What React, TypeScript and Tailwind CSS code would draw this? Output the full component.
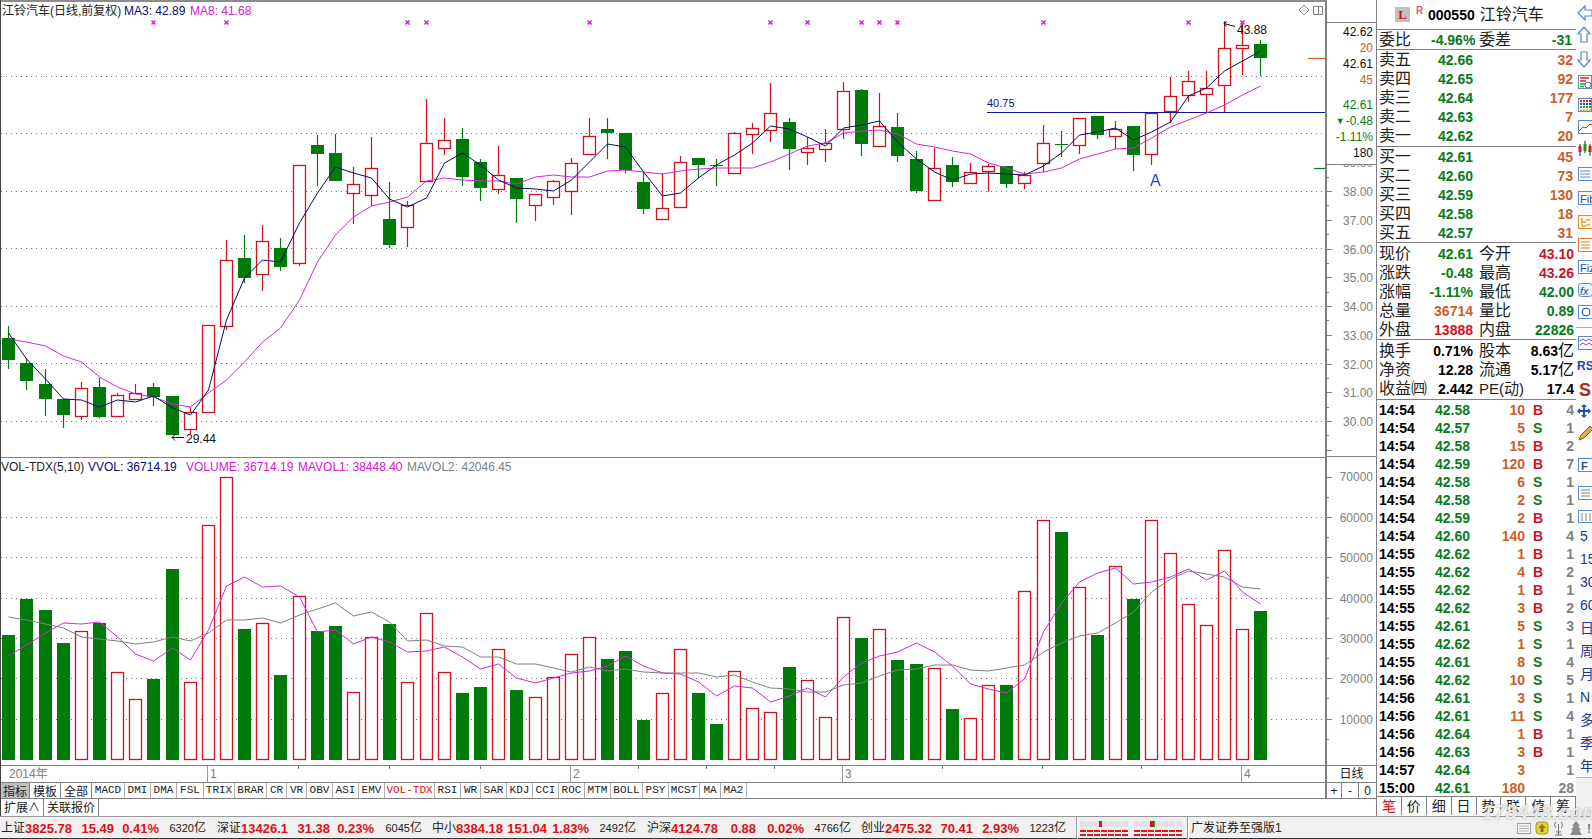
import React from 'react';

const X = (i: number) => Math.round(8.3 + 18.145 * i) + 0.5;

// [high, bodyTop, bodyBottom, low, 'r'|'g']
const C: [number, number, number, number, string][] = [
  [326, 338, 360, 369, 'g'], [358, 363, 381, 390, 'g'], [369, 384, 399, 416, 'g'], [399, 399, 415, 428, 'g'],
  [382, 388, 416, 420, 'r'], [378, 387, 417, 418, 'g'], [393, 395, 416, 416, 'r'], [384, 393, 399, 399, 'r'],
  [383, 387, 397, 406, 'g'], [396, 396, 435, 435, 'g'], [407, 412, 429, 434, 'r'], [325, 325, 412, 412, 'r'],
  [240, 260, 326, 330, 'r'], [235, 258, 278, 283, 'g'], [225, 241, 274, 291, 'r'], [238, 248, 267, 271, 'g'],
  [165, 165, 263, 266, 'r'], [135, 145, 154, 186, 'g'], [134, 153, 181, 181, 'g'], [167, 184, 193, 224, 'r'],
  [137, 168, 195, 206, 'r'], [182, 219, 245, 248, 'g'], [201, 205, 227, 247, 'r'], [99, 143, 181, 181, 'r'],
  [118, 140, 148, 155, 'r'], [128, 139, 177, 186, 'g'], [159, 162, 188, 201, 'g'], [146, 175, 189, 194, 'r'],
  [178, 178, 199, 223, 'g'], [194, 194, 205, 221, 'r'], [180, 181, 197, 205, 'r'], [158, 163, 191, 215, 'r'],
  [118, 136, 154, 154, 'r'], [118, 129, 133, 159, 'g'], [133, 133, 170, 173, 'g'], [173, 182, 209, 214, 'g'],
  [173, 208, 219, 219, 'r'], [156, 162, 207, 208, 'r'], [158, 158, 165, 178, 'g'], [159, 165, 166, 186, 'g'],
  [132, 133, 173, 173, 'r'], [123, 128, 134, 154, 'r'], [83, 113, 130, 142, 'r'], [118, 122, 149, 170, 'g'],
  [137, 148, 152, 165, 'r'], [129, 143, 149, 162, 'r'], [82, 91, 129, 139, 'r'], [89, 90, 144, 156, 'g'],
  [93, 126, 146, 146, 'r'], [113, 127, 156, 162, 'g'], [151, 159, 191, 193, 'g'], [148, 168, 200, 200, 'r'],
  [157, 165, 182, 187, 'g'], [163, 172, 183, 183, 'r'], [164, 166, 171, 192, 'r'], [166, 166, 184, 188, 'g'],
  [172, 175, 183, 189, 'r'], [125, 143, 163, 172, 'r'], [131, 144, 145, 157, 'g'], [118, 118, 145, 154, 'r'],
  [116, 116, 135, 139, 'g'], [121, 129, 136, 149, 'r'], [126, 126, 155, 171, 'g'], [113, 113, 154, 165, 'r'],
  [77, 96, 111, 123, 'r'], [71, 81, 95, 102, 'r'], [71, 88, 94, 113, 'r'], [21, 48, 85, 112, 'r'],
  [23, 45, 48, 75, 'r'], [40, 44, 58, 76, 'g'],
];

const MA3 = [333, 359, 379, 399, 400, 407, 400, 402, 396, 408, 415, 390, 320, 278, 260, 262, 223, 193, 167, 173, 178, 199, 207, 198, 163, 153, 165, 180, 188, 189, 191, 180, 162, 144, 147, 172, 196, 193, 178, 165, 155, 143, 126, 129, 137, 146, 128, 125, 121, 142, 159, 172, 180, 174, 173, 174, 175, 166, 153, 135, 132, 128, 140, 132, 122, 96, 88, 71, 61, 51];
const MA8 = [339, 342, 346, 356, 362, 377, 387, 394, 397, 404, 407, 393, 380, 362, 342, 328, 300, 262, 235, 217, 206, 202, 197, 181, 178, 180, 181, 181, 184, 177, 175, 177, 177, 171, 170, 172, 174, 171, 169, 168, 168, 168, 162, 154, 146, 143, 133, 131, 130, 134, 144, 147, 151, 154, 163, 168, 174, 172, 168, 159, 154, 149, 148, 138, 127, 120, 113, 105, 95, 86];

const VOL = [635, 599, 610, 643, 631, 623, 672, 699, 679, 569, 682, 525, 477, 629, 623, 675, 596, 631, 626, 692, 637, 624, 682, 613, 672, 693, 687, 649, 690, 697, 677, 654, 637, 659, 651, 720, 693, 649, 693, 724, 671, 708, 712, 667, 680, 717, 617, 638, 629, 660, 664, 668, 709, 718, 685, 685, 591, 520, 532, 587, 635, 566, 599, 520, 553, 604, 625, 550, 629, 611];
const MV1 = [656, 645, 633, 623, 624, 622, 637, 654, 661, 648, 660, 630, 586, 577, 587, 586, 597, 632, 630, 644, 637, 642, 652, 651, 647, 657, 669, 664, 678, 683, 678, 673, 671, 666, 656, 666, 673, 674, 682, 696, 686, 688, 702, 696, 688, 697, 677, 663, 656, 652, 643, 652, 666, 684, 689, 693, 679, 632, 603, 582, 573, 568, 584, 582, 577, 569, 580, 571, 592, 604];
const MV2 = [617, 620, 624, 628, 637, 639, 641, 644, 642, 637, 641, 633, 620, 620, 618, 623, 615, 609, 603, 616, 612, 622, 641, 640, 646, 647, 657, 657, 664, 664, 668, 672, 667, 671, 669, 672, 673, 673, 673, 677, 675, 682, 688, 689, 692, 692, 685, 683, 676, 670, 669, 665, 665, 670, 671, 668, 665, 652, 643, 636, 633, 623, 612, 592, 579, 571, 574, 577, 587, 589];

const MARKS = [8, 12, 22, 23, 32, 42, 44, 47, 48, 49, 57, 65, 68];

const pts = (a: number[]) => a.map((y, i) => `${X(i)},${y}`).join(' ');

function MainChart() {
  return (
    <svg width={1324} height={455} viewBox="1 2 1324 455" className="block">
      {[76, 133, 191, 248, 306, 363, 421].map((y) => (
        <line key={y} x1={1} x2={1325} y1={y + 0.5} y2={y + 0.5} stroke="#777" strokeDasharray="1 4" />
      ))}
      {C.map(([h, t, b, l, k], i) => {
        const x = X(i);
        const col = k === 'r' ? '#cc1420' : '#007a0a';
        return (
          <g key={i}>
            <line x1={x} x2={x} y1={h} y2={l} stroke={col} strokeWidth={1.2} />
            {k === 'r' ? (
              <rect x={x - 6} y={t + 0.5} width={12} height={b - t} fill="#fff" stroke={col} strokeWidth={1.3} />
            ) : (
              <rect x={x - 6.5} y={t} width={13} height={Math.max(b - t, 1)} fill={col} shapeRendering="crispEdges" />
            )}
          </g>
        );
      })}
      <line x1={987} x2={1325} y1={112.5} y2={112.5} stroke="#10109a" strokeWidth={1} />
      <polyline points={pts(MA8)} fill="none" stroke="#d22ad2" strokeWidth={1} />
      <polyline points={pts(MA3)} fill="none" stroke="#0a0a60" strokeWidth={1} />
      {MARKS.map((i) => (
        <path key={i} d={`M${X(i) - 2} 20.5l4 4M${X(i) + 2} 20.5l-4 4`} stroke="#e020e0" strokeWidth={1.7} />
      ))}
      <text x={987} y={107} fontSize={11} fill="#10109a">40.75</text>
      <text x={1150} y={186} fontSize={16} fill="#2a48c8">A</text>
      <text x={1237} y={34} fontSize={12} fill="#111">43.88</text>
      <path d="M1224 23.5l11 3M1224 23.5l3 -2M1224 23.5l2.5 3" stroke="#111" fill="none" strokeWidth={1} />
      <text x={186} y={443} fontSize={12} fill="#111">29.44</text>
      <path d="M172 437.5h12M172 437.5l3 -3M172 437.5l3 3" stroke="#111" fill="none" strokeWidth={1} />
      <path d="M1304 5l5 5l-5 5l-5 -5z" fill="none" stroke="#909090" />
      <rect x={1313.5} y={6.5} width={9} height={8} fill="none" stroke="#808080" />
      <line x1={1318.5} x2={1318.5} y1={6} y2={15} stroke="#808080" />
      <line x1={1308} x2={1325} y1={58.5} y2={58.5} stroke="#d06020" strokeWidth={1.2} />
      <line x1={1314} x2={1325} y1={168.5} y2={168.5} stroke="#0a7a14" strokeWidth={1.2} />
    </svg>
  );
}

function VolChart() {
  return (
    <svg width={1324} height={307} viewBox="1 458 1324 307" className="block">
      {[517, 557, 598, 638, 678, 719].map((y) => (
        <line key={y} x1={1} x2={1325} y1={y + 0.5} y2={y + 0.5} stroke="#777" strokeDasharray="1 4" />
      ))}
      {VOL.map((t, i) => {
        const x = X(i);
        return C[i][4] === 'r' ? (
          <rect key={i} x={x - 6} y={t + 0.5} width={12} height={759 - t} fill="#fff" stroke="#cc1420" strokeWidth={1.3} />
        ) : (
          <rect key={i} x={x - 6.5} y={t} width={13} height={760 - t} fill="#007a0a" shapeRendering="crispEdges" />
        );
      })}
      <polyline points={pts(MV2)} fill="none" stroke="#808080" strokeWidth={1} />
      <polyline points={pts(MV1)} fill="none" stroke="#d22ad2" strokeWidth={1} />
    </svg>
  );
}

function MainAxis() {
  const labels = ['39.00', '38.00', '37.00', '36.00', '35.00', '34.00', '33.00', '32.00', '31.00', '30.00'];
  const ticks: number[] = [];
  for (let k = -1; k < 20; k++) ticks.push(191 + k * 14.375);
  return (
    <svg width={49} height={291} viewBox="1327 165 49 291" className="block">
      {ticks.map((y, k) => (
        <line key={k} x1={1327} x2={k % 2 === 1 ? 1332 : 1329} y1={Math.round(y) + 0.5} y2={Math.round(y) + 0.5} stroke="#808080" />
      ))}
      {labels.map((t, i) => (
        <text key={t} x={1373} y={162.25 + i * 28.75 + 5} textAnchor="end" fontSize={12} fill="#808080">{t}</text>
      ))}
    </svg>
  );
}

function VolAxis() {
  const labels = ['70000', '60000', '50000', '40000', '30000', '20000', '10000'];
  const major = [476.7, 517, 557.3, 598, 638, 678.3, 719];
  return (
    <svg width={49} height={308} viewBox="1327 457 49 308" className="block">
      {major.map((y, i) => (
        <g key={i}>
          <line x1={1327} x2={1332} y1={Math.round(y) + 0.5} y2={Math.round(y) + 0.5} stroke="#808080" />
          <line x1={1327} x2={1329} y1={Math.round(y + 20) + 0.5} y2={Math.round(y + 20) + 0.5} stroke="#808080" />
          <text x={1373} y={y + 4.5} textAnchor="end" fontSize={12} fill="#808080">{labels[i]}</text>
        </g>
      ))}
    </svg>
  );
}

function TimeAxis() {
  return (
    <svg width={1324} height={16} viewBox="1 766 1324 16" className="block">
      {[207.5, 570.5, 842.5, 1241.5].map((x) => (
        <line key={x} x1={x} x2={x} y1={766} y2={782} stroke="#9a9a9a" />
      ))}
      {[298.5, 389.5, 480.5, 638.5, 706.5, 774.5, 942.5, 1042.5, 1141.5].map((x) => (
        <line key={x} x1={x} x2={x} y1={766} y2={769} stroke="#808080" />
      ))}
      <text x={9} y={778} fontSize={12} fill="#808080">2014年</text>
      <text x={210} y={778} fontSize={12} fill="#808080">1</text>
      <text x={573} y={778} fontSize={12} fill="#808080">2</text>
      <text x={845} y={778} fontSize={12} fill="#808080">3</text>
      <text x={1244} y={778} fontSize={12} fill="#808080">4</text>
    </svg>
  );
}

const ASK = [['卖五', '42.66', '32'], ['卖四', '42.65', '92'], ['卖三', '42.64', '177'], ['卖二', '42.63', '7'], ['卖一', '42.62', '20']];
const BID = [['买一', '42.61', '45'], ['买二', '42.60', '73'], ['买三', '42.59', '130'], ['买四', '42.58', '18'], ['买五', '42.57', '31']];
const G = 'text-[#0a7a1e]';
const R = 'text-[#cc1424]';
const O = 'text-[#c8602a]';
const K = 'text-black';
const STATS: [string, string, string, string, string, string][] = [
  ['现价', '42.61', G, '今开', '43.10', R],
  ['涨跌', '-0.48', G, '最高', '43.26', R],
  ['涨幅', '-1.11%', G, '最低', '42.00', G],
  ['总量', '36714', O, '量比', '0.89', G],
  ['外盘', '13888', R, '内盘', '22826', G],
];
const TICKS: [string, string, string, string, string][] = [
  ['14:54', '42.58', '10', 'B', '4'], ['14:54', '42.57', '5', 'S', '1'], ['14:54', '42.58', '15', 'B', '2'],
  ['14:54', '42.59', '120', 'B', '7'], ['14:54', '42.58', '6', 'S', '1'], ['14:54', '42.58', '2', 'S', '1'],
  ['14:54', '42.59', '2', 'B', '1'], ['14:54', '42.60', '140', 'B', '4'], ['14:55', '42.62', '1', 'B', '1'],
  ['14:55', '42.62', '4', 'B', '2'], ['14:55', '42.62', '1', 'B', '1'], ['14:55', '42.62', '3', 'B', '2'],
  ['14:55', '42.61', '5', 'S', '3'], ['14:55', '42.62', '1', 'S', '1'], ['14:55', '42.61', '8', 'S', '4'],
  ['14:56', '42.62', '10', 'S', '5'], ['14:56', '42.61', '3', 'S', '1'], ['14:56', '42.61', '11', 'S', '4'],
  ['14:56', '42.64', '1', 'B', '1'], ['14:56', '42.63', '3', 'B', '1'], ['14:57', '42.64', '3', '', '1'],
  ['15:00', '42.61', '180', '', '28'],
];

function BookRow({ r }: { r: string[] }) {
  return (
    <div className="flex h-[19px] items-center pl-[2px]">
      <span className="w-[56px] text-[16px] leading-none text-[#222]">{r[0]}</span>
      <span className={`w-[38px] text-right text-[14px] font-bold leading-none ${G}`}>{r[1]}</span>
      <span className={`flex-1 pr-[3px] text-right text-[14px] font-bold leading-none ${O}`}>{r[2]}</span>
    </div>
  );
}

function StatRow({ a, b, ac, c, d, dc }: { a: React.ReactNode; b: React.ReactNode; ac: string; c: React.ReactNode; d: React.ReactNode; dc: string }) {
  return (
    <div className="flex h-[19px] items-center pl-[2px]">
      <span className="w-[50px] whitespace-nowrap text-[16px] leading-none text-[#222]">{a}</span>
      <span className={`w-[44px] whitespace-nowrap text-right text-[14px] font-bold leading-none ${ac}`}>{b}</span>
      <span className="ml-[6px] w-[44px] whitespace-nowrap text-[16px] leading-none text-[#222]">{c}</span>
      <span className={`flex-1 whitespace-nowrap pr-[2px] text-right text-[14px] font-bold leading-none ${dc}`}>{d}</span>
    </div>
  );
}

const YI = <span className="text-[16px] font-normal">亿</span>;

function RightPanel() {
  return (
    <div className="flex w-[199px] flex-col overflow-hidden">
      <div className="flex h-[30px] shrink-0 items-center border-b border-[#808080] pl-[18px]">
        <span className="flex h-[15px] w-[15px] items-center justify-center bg-[#c0c0c0] text-[13px] font-bold leading-none text-[#d01010] [font-family:'Liberation_Serif',serif]">L</span>
        <span className="mb-[8px] ml-[6px] w-[12px] text-[10px] font-bold leading-none text-[#e06070]">R</span>
        <span className="text-[14px] font-bold leading-none text-black">000550</span>
        <span className="ml-[5px] text-[16px] leading-none text-[#222]">江铃汽车</span>
      </div>
      <div className="flex h-[20px] shrink-0 items-center border-b border-[#808080] pl-[2px]">
        <span className="w-[52px] text-[16px] leading-none text-[#222]">委比</span>
        <span className={`w-[43px] text-right text-[14px] font-bold leading-none ${G}`}>-4.96%</span>
        <span className="ml-[5px] w-[44px] text-[16px] leading-none text-[#222]">委差</span>
        <span className={`flex-1 pr-[4px] text-right text-[14px] font-bold leading-none ${G}`}>-31</span>
      </div>
      <div className="h-[97px] shrink-0 border-b border-[#808080]">
        {ASK.map((r) => <BookRow key={r[0]} r={r} />)}
      </div>
      <div className="h-[96px] shrink-0 border-b border-[#808080]">
        {BID.map((r) => <BookRow key={r[0]} r={r} />)}
      </div>
      <div className="h-[97px] shrink-0 border-b border-[#808080] pt-[1px]">
        {STATS.map((s) => <StatRow key={s[0]} a={s[0]} b={s[1]} ac={s[2]} c={s[3]} d={s[4]} dc={s[5]} />)}
      </div>
      <div className="h-[60px] shrink-0 border-b border-[#808080] pt-[1px]">
        <StatRow a="换手" b="0.71%" ac={K} c="股本" d={<>8.63{YI}</>} dc={K} />
        <StatRow a="净资" b="12.28" ac={K} c="流通" d={<>5.17{YI}</>} dc={K} />
        <StatRow a="收益㈣" b="2.442" ac={K} c={<span className="text-[15px]">PE(动)</span>} d="17.4" dc={K} />
      </div>
      <div className="h-[397px] shrink-0 border-b border-[#808080] pt-[1px]">
        {TICKS.map((t, i) => (
          <div key={i} className="flex h-[18px] items-center pl-[2px] text-[14px] font-bold leading-none">
            <span className="w-[56px] text-black">{t[0]}</span>
            <span className={`w-[36px] ${G}`}>{t[1]}</span>
            <span className={`w-[54px] text-right ${O}`}>{t[2]}</span>
            <span className={`w-[17px] pl-[8px] ${t[3] === 'B' ? R : G}`}>{t[3]}</span>
            <span className="flex-1 pr-[2px] text-right text-[#808080]">{t[4]}</span>
          </div>
        ))}
      </div>
      <div className="flex h-[18px] shrink-0 text-[14px] leading-none text-[#222]">
        {['笔', '价', '细', '日', '势', '联', '值', '筹'].map((t, i) => (
          <span key={t} className={`flex h-full w-[25px] items-center justify-center border-r border-[#808080] ${i === 0 ? 'text-[#d01010]' : ''}`}>{t}</span>
        ))}
      </div>
    </div>
  );
}

function ToolIcons() {
  return (
    <svg width={16} height={524} viewBox="0 0 16 524" className="block shrink-0">
      <path d="M2 13l7 -7v4h7v6h-7v4z" fill="#fff" stroke="#5a8cc8" strokeWidth={1.2} />
      <path d="M8 27l6 7h-3v8h-6v-8h-3z" fill="#fff" stroke="#5a8cc8" strokeWidth={1.2} />
      <path d="M8 67l6 -7h-3v-8h-6v8h-3z" fill="#fff" stroke="#5a8cc8" strokeWidth={1.2} />
      <rect x={2.5} y={75.5} width={13} height={13} fill="#fff" stroke="#5a8cc8" />
      <path d="M4 78h9M4 81h6" stroke="#d02020" strokeWidth={1.5} />
      <path d="M4 84h5M4 86.5h4" stroke="#20a020" strokeWidth={1.5} />
      <circle cx={12} cy={85} r={3} fill="none" stroke="#707070" />
      <rect x={2.5} y={98.5} width={13} height={13} fill="#fff" stroke="#5a8cc8" />
      <path d="M4 101h2M7 101h2M10 101h2M13 101h2" stroke="#d02020" strokeWidth={2} />
      <path d="M4 104h2M7 104h2M10 104h2M13 104h2" stroke="#2050c0" strokeWidth={2} />
      <path d="M4 107h2M7 107h2M10 107h2M13 107h2" stroke="#20a020" strokeWidth={2} />
      <path d="M4 110h2M7 110h2M10 110h2M13 110h2" stroke="#d0a020" strokeWidth={1.5} />
      <rect x={2.5} y={120.5} width={14} height={13} fill="#fff" stroke="#5a8cc8" />
      <path d="M3 131l4 -4l3 1l4 -4l2 1" stroke="#d02020" fill="none" />
      <path d="M4 144v12M9 141v12M14 144v12" stroke="#222" />
      <rect x={2.5} y={146} width={3} height={6} fill="#d02020" />
      <rect x={7.5} y={144} width={3} height={7} fill="#1a9a1a" />
      <rect x={12.5} y={146} width={3} height={6} fill="#d02020" />
      <rect x={2.5} y={167.5} width={14} height={13} fill="#fff" stroke="#5a8cc8" />
      <path d="M4 171h10M4 174h10M4 177h10" stroke="#5a8cc8" />
      <rect x={2.5} y={191.5} width={14} height={13} fill="#fff" stroke="#5a8cc8" />
      <text x={4} y={203} fontSize={11} fill="#2050a0">Fib</text>
      <rect x={2.5} y={215.5} width={14} height={13} fill="#fff6d8" stroke="#e09030" />
      <path d="M6 218v8h4M6 222h4M10 220h4M10 225h4" stroke="#d08020" fill="none" />
      <rect x={2.5} y={238.5} width={14} height={13} fill="#fff" stroke="#e08030" />
      <path d="M5 242h9M5 245h9M5 248h9" stroke="#e08030" />
      <rect x={2.5} y={260.5} width={14} height={13} fill="#fff" stroke="#5a8cc8" />
      <text x={4} y={272} fontSize={11} fill="#2050a0">Fiz</text>
      <rect x={2.5} y={283.5} width={14} height={13} rx={3} fill="#eef4ff" stroke="#5a8cc8" />
      <text x={4} y={295} fontSize={11} fontStyle="italic" fill="#2050a0">fx</text>
      <rect x={2.5} y={305.5} width={14} height={13} fill="#fff" stroke="#5a8cc8" />
      <circle cx={10} cy={312} r={4} fill="none" stroke="#2050a0" />
      <line x1={0} x2={16} y1={327.5} y2={327.5} stroke="#b0b0b0" />
      <rect x={2.5} y={336.5} width={14} height={13} fill="#fff" stroke="#5a8cc8" />
      <path d="M4 341l3 -2l3 2l3 -2l3 2M4 345l3 -2l3 2l3 -2l3 2" stroke="#a040a0" fill="none" />
      <text x={1} y={370} fontSize={12} fontWeight="bold" fill="#2848a8">RS</text>
      <text x={3} y={396} fontSize={18} fontWeight="bold" fill="#b02828">S</text>
      <path d="M8 404l3 3h-2v3h3v-2l3 3l-3 3v-2h-3v3h2l-3 3l-3 -3h2v-3h-3v2l-3 -3l3 -3v2h3v-3h-2z" fill="#2050b8" />
      <path d="M3 440l2 -5l9 -9l3 3l-9 9z" fill="#e0b040" stroke="#806020" />
      <rect x={2.5} y={458.5} width={14} height={13} fill="#fff" stroke="#5a8cc8" />
      <text x={5} y={470} fontSize={11} fontWeight="bold" fill="#2050a0">F</text>
      <rect x={2.5} y={486.5} width={14} height={13} fill="#fff" stroke="#5a8cc8" />
      <path d="M5 490h9M5 493h9M5 496h9" stroke="#808080" />
      <rect x={2.5} y={510.5} width={14} height={12} fill="#fff" stroke="#5a8cc8" />
      <path d="M6 513v8M10 513v8M14 513v8" stroke="#808080" />
    </svg>
  );
}

function Toolbar() {
  return (
    <div className="flex w-[16px] flex-col overflow-hidden bg-[#fbfbfb]">
      <ToolIcons />
      <div className="h-[253px] shrink-0 text-[14px] leading-none text-[#1a3a8a]">
        {['5', '15', '30', '60', '日', '周', '月', 'N', '多', '季', '年'].map((t, i) => (
          <div key={i} className="flex h-[23px] items-center whitespace-nowrap pl-[4px]">{t}</div>
        ))}
      </div>
      <div className="flex-1 border-t border-[#b8b8b8] bg-[#f0f0f0]" />
    </div>
  );
}

const TABS: [string, string][] = [
  ['MACD', 'w-[33px]'], ['DMI', 'w-[26px]'], ['DMA', 'w-[26px]'], ['FSL', 'w-[27px]'], ['TRIX', 'w-[31px]'],
  ['BRAR', 'w-[32px]'], ['CR', 'w-[20px]'], ['VR', 'w-[20px]'], ['OBV', 'w-[26px]'], ['ASI', 'w-[26px]'],
  ['EMV', 'w-[26px]'], ['VOL-TDX', 'w-[50px]'], ['RSI', 'w-[26px]'], ['WR', 'w-[20px]'], ['SAR', 'w-[26px]'],
  ['KDJ', 'w-[26px]'], ['CCI', 'w-[26px]'], ['ROC', 'w-[26px]'], ['MTM', 'w-[26px]'], ['BOLL', 'w-[32px]'],
  ['PSY', 'w-[26px]'], ['MCST', 'w-[31px]'], ['MA', 'w-[21px]'], ['MA2', 'w-[26px]'],
];

function LeftBlock() {
  return (
    <div className="flex w-[1377px] flex-col border-l border-r border-l-[#444] border-r-[#808080]">
      <div className="flex h-[765px] shrink-0">
        <div className="relative w-[1324px]">
          <div className="h-[457px] border-t-2 border-[#8c8c8c]">
            <MainChart />
            <div className="absolute left-[1px] top-[4px] flex items-center whitespace-nowrap text-[12px] leading-[14px]">
              <span className="w-[122px] text-[#222]">江铃汽车(日线,前复权)</span>
              <span className="w-[66px] text-[#0a0a70]">MA3: 42.89</span>
              <span className="text-[#d020d0]">MA8: 41.68</span>
            </div>
          </div>
          <div className="relative h-[308px] border-t border-[#808080]">
            <VolChart />
            <div className="absolute left-0 top-[2px] flex items-center whitespace-nowrap text-[12px] leading-[14px]">
              <span className="w-[87px] text-[#222]">VOL-TDX(5,10)</span>
              <span className="w-[98px] text-[#0a0a70]">VVOL: 36714.19</span>
              <span className="w-[112px] text-[#d020d0]">VOLUME: 36714.19</span>
              <span className="w-[109px] text-[#d020d0]">MAVOL1: 38448.40</span>
              <span className="text-[#808080]">MAVOL2: 42046.45</span>
            </div>
          </div>
        </div>
        <div className="flex w-[51px] flex-col border-l-2 border-[#808080]">
          <div className="h-[165px] shrink-0 border-b border-[#808080] pt-[22px] text-[12px] leading-none">
            <div className="border-t border-[#808080] pr-[3px] pt-[1px] text-right">
              <div className="flex h-[16px] items-center justify-end text-[#111]">42.62</div>
              <div className="flex h-[16px] items-center justify-end text-[#c8602a]">20</div>
              <div className="flex h-[16px] items-center justify-end text-[#111]">42.61</div>
              <div className="flex h-[16px] items-center justify-end text-[#c8602a]">45</div>
              <div className="mt-[9px] flex h-[16px] items-center justify-end text-[#0a7a1e]">42.61</div>
              <div className="flex h-[16px] items-center justify-end text-[#0a7a1e]"><span className="mr-[1px] text-[9px]">▼</span>-0.48</div>
              <div className="flex h-[16px] items-center justify-end text-[#0a7a1e]">-1.11%</div>
              <div className="flex h-[16px] items-center justify-end text-[#111]">180</div>
            </div>
          </div>
          <div className="h-[292px] shrink-0 border-b border-[#808080]">
            <MainAxis />
          </div>
          <VolAxis />
        </div>
      </div>
      <div className="flex h-[17px] shrink-0 border-t border-[#808080]">
        <div className="w-[1324px]"><TimeAxis /></div>
        <div className="flex w-[51px] items-center justify-center border-l-2 border-[#808080] text-[12px] leading-none text-[#222]">日线</div>
      </div>
      <div className="flex h-[16px] shrink-0 border-t border-[#808080]">
        <div className="flex w-[1324px] text-[11px] leading-none text-[#222] [font-family:'Liberation_Mono',monospace]">
          <span className="flex w-[29px] items-center justify-center border-r border-[#808080] bg-[#c0c0c0] text-[12px] [font-family:'Noto_Sans_CJK_SC',sans-serif]">指标</span>
          <span className="flex w-[31px] items-center justify-center border-r border-[#808080] text-[12px] [font-family:'Noto_Sans_CJK_SC',sans-serif]">模板</span>
          <span className="flex w-[31px] items-center justify-center border-r border-[#808080] text-[12px] [font-family:'Noto_Sans_CJK_SC',sans-serif]">全部</span>
          {TABS.map(([t, w]) => (
            <span key={t} className={`flex items-center justify-center border-r border-[#b0b0b0] ${w} ${t === 'VOL-TDX' ? 'text-[#d01010]' : ''}`}>{t}</span>
          ))}
        </div>
        <div className="flex w-[51px] border-l-2 border-[#808080] text-[12px] leading-none text-[#222]">
          <span className="flex w-[15px] items-center justify-center border-r border-[#808080]">+</span>
          <span className="flex w-[17px] items-center justify-center border-r border-[#808080]">-</span>
          <span className="flex flex-1 items-center justify-center">0</span>
        </div>
      </div>
      <div className="flex h-[18px] shrink-0 border-t border-[#808080] text-[12px] leading-none text-[#222]">
        <span className="flex w-[43px] items-center justify-center border-r border-[#808080]">扩展∧</span>
        <span className="flex w-[55px] items-center justify-center border-r border-[#808080]">关联报价</span>
      </div>
    </div>
  );
}

type Q = { l: string; lw: string; a: string; aw: string; b: string; bw: string; c: string; cw: string; d: string; dw: string };
const QUOTES: Q[] = [
  { l: '上证', lw: 'w-[25px]', a: '3825.78', aw: 'w-[46px]', b: '15.49', bw: 'w-[43px]', c: '0.41%', cw: 'w-[45px]', d: '6320', dw: 'w-[47px]' },
  { l: '深证', lw: 'w-[35px]', a: '13426.1', aw: 'w-[45px]', b: '31.38', bw: 'w-[44px]', c: '0.23%', cw: 'w-[44px]', d: '6045', dw: 'w-[48px]' },
  { l: '中小', lw: 'w-[34px]', a: '8384.18', aw: 'w-[46px]', b: '151.04', bw: 'w-[45px]', c: '1.83%', cw: 'w-[42px]', d: '2492', dw: 'w-[47px]' },
  { l: '沪深', lw: 'w-[35px]', a: '4124.78', aw: 'w-[45px]', b: '0.88', bw: 'w-[40px]', c: '0.02%', cw: 'w-[48px]', d: '4766', dw: 'w-[47px]' },
  { l: '创业', lw: 'w-[34px]', a: '2475.32', aw: 'w-[46px]', b: '70.41', bw: 'w-[42px]', c: '2.93%', cw: 'w-[46px]', d: '1223', dw: 'w-[47px]' },
];

function StatusBar() {
  return (
    <div className="flex h-[23px] shrink-0 items-center border-t border-[#9a9a9a] bg-[#f0f0f0] shadow-[inset_0_-1px_0_#333] text-[12px] leading-none">
      {QUOTES.map((q) => (
        <React.Fragment key={q.l}>
          <span className={`${q.lw} text-right text-[#222]`}>{q.l}</span>
          <span className={`${q.aw} text-[13px] font-bold text-[#e01010]`}>{q.a}</span>
          <span className={`${q.bw} text-right text-[13px] font-bold text-[#e01010]`}>{q.b}</span>
          <span className={`${q.cw} text-right text-[13px] font-bold text-[#e01010]`}>{q.c}</span>
          <span className={`${q.dw} text-right text-[#222]`}><span className="text-[11px]">{q.d}</span>亿</span>
        </React.Fragment>
      ))}
      <div className="ml-[10px] h-full w-[2px] border-l border-[#9a9a9a] bg-white" />
      <svg width={107} height={19} viewBox="0 0 107 19" className="ml-[1px] shrink-0">
        {[0, 54].map((o) => (
          <g key={o}>
            {[0, 7, 14, 21, 28, 35, 42].map((x) => (
              <g key={x}>
                <rect x={o + x + 1} y={2} width={6} height={6} fill="#e2e2e2" />
                <rect x={o + x + 1} y={11} width={6} height={2} fill="#e01818" />
                <rect x={o + x + 1} y={15} width={6} height={2} fill="#e01818" />
              </g>
            ))}
          </g>
        ))}
        <rect x={20} y={2} width={3} height={6} fill="#d01818" />
        <rect x={71} y={2} width={4} height={6} fill="#d01818" />
        <rect x={75} y={2} width={1} height={6} fill="#20a020" />
      </svg>
      <div className="ml-[1px] h-full w-[2px] border-l border-[#9a9a9a] bg-white" />
      <span className="ml-[2px] w-[240px] whitespace-nowrap text-[#222]">广发证券至强版1</span>
      <svg width={80} height={20} viewBox="0 0 80 20" className="ml-auto shrink-0">
        <rect x={5.5} y={5.5} width={13} height={10} fill="#f8f8f8" stroke="#a0a0a0" />
        <path d="M7 8h10M7 10.500h10M7 13h10" stroke="#b0b0b0" />
        <rect x={24} y={4} width={12} height={12} rx={3} fill="#e6d23c" stroke="#a89820" />
        <path d="M30 6l4 4h-2.500v4h-3v-4h-2.500z" fill="#8a7a10" />
        <path d="M49 4a4 4 0 0 1 0 6M44 4a4 4 0 0 0 0 6M46.500 6v11M43 17h7M44 14h5" stroke="#707070" fill="none" />
        <path d="M64 3l4 5h-2l3 4h-2l3 5h-12l3 -5h-2l3 -4h-2z" fill="#8a8a8a" />
        <text x={75} y={15} fontSize={12} fontWeight="bold" fill="#777">!</text>
      </svg>
    </div>
  );
}

export default function App() {
  return (
    <div className="relative flex h-[839px] w-[1592px] flex-col overflow-hidden bg-white text-black [font-family:'Liberation_Sans','Noto_Sans_CJK_SC',sans-serif]">
      <div className="flex h-[816px] shrink-0">
        <LeftBlock />
        <RightPanel />
        <Toolbar />
      </div>
      <StatusBar />
      <div className="pointer-events-none absolute left-[1482px] top-[801px] whitespace-nowrap text-[21px] font-bold italic leading-none text-white/75 [text-shadow:0_0_2px_#9a9a9a]">178448.com</div>
    </div>
  );
}
